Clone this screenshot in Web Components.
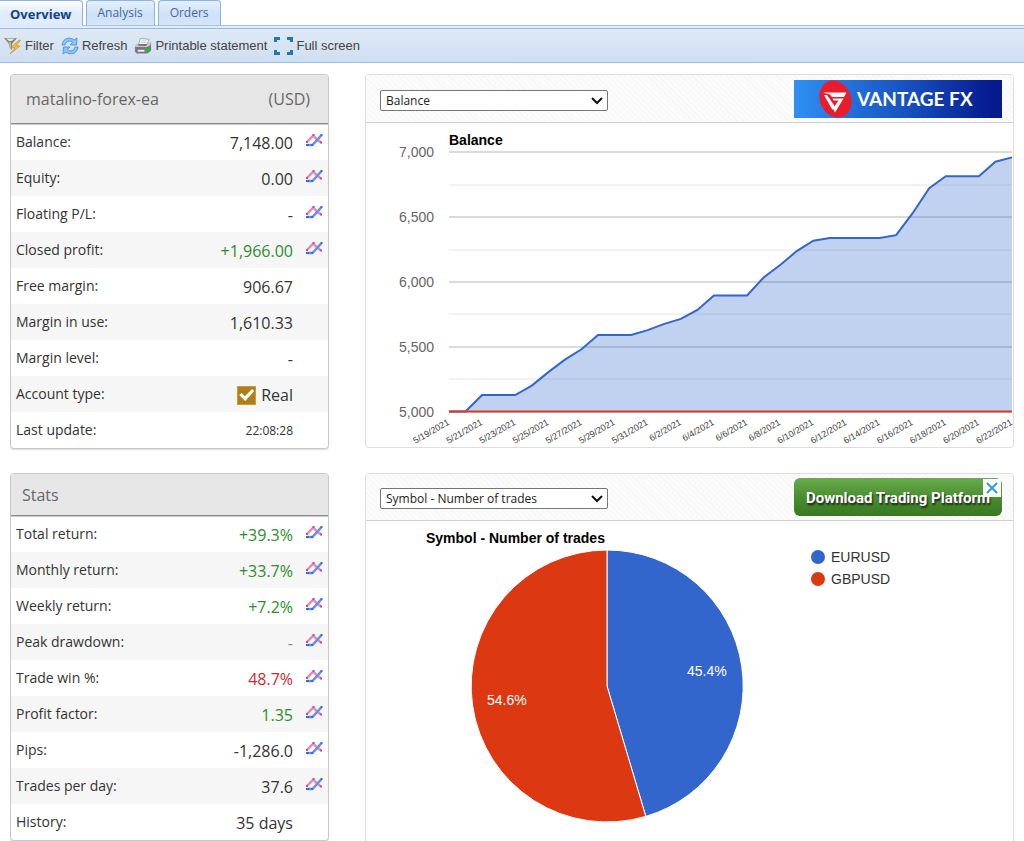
<!DOCTYPE html>
<html lang="en">
<head>
<meta charset="utf-8">
<title>Account overview</title>
<style>
  html, body { margin: 0; background: #fff; }
  body { font-family: "Open Sans", "Noto Sans", sans-serif; color: #333; }
</style>
</head>
<body>
<trading-app></trading-app>

<script>
const define = (name, html, setup) => {
  const tpl = document.createElement('template');
  tpl.innerHTML = html;
  customElements.define(name, class extends HTMLElement {
    constructor() {
      super();
      this.attachShadow({ mode: 'open' }).append(tpl.content.cloneNode(true));
    }
    connectedCallback() {
      if (setup && !this.ready) { this.ready = true; setup(this, this.shadowRoot); }
    }
  });
};

/* Tab strip */
define('tab-strip', `
<style>
  :host { display: block; background: #deecfd; border-bottom: 1px solid #99bbe8; }
  nav { display: flex; align-items: flex-end; gap: 3px; height: 26px; box-sizing: border-box;
        background: #fff; border-bottom: 1px solid #a3c2ee; }
  .gap { height: 2px; }
  button { height: 25px; box-sizing: border-box; padding: 0 11px; margin: 0;
           font: 12px/24px "Open Sans", sans-serif; color: #416aa3; cursor: pointer;
           background: linear-gradient(#e4effc, #cfe0f7 60%, #d6e5fa);
           border: 1px solid #8db2e3; border-bottom: 0; border-radius: 4px 4px 0 0; }
  button[aria-selected="true"] { height: 26px; padding: 0 10px; margin-bottom: -1px; font-weight: bold; font-size: 13px;
           color: #15428b; background: linear-gradient(#fff, #deecfd 50%);
           border-left: 0; border-top-left-radius: 0; }
</style>
<nav role="tablist">
  <button role="tab" aria-selected="true">Overview</button>
  <button role="tab" aria-selected="false">Analysis</button>
  <button role="tab" aria-selected="false">Orders</button>
</nav>
<div class="gap"></div>`);

/* Toolbar button: icon slot plus label */
define('tool-button', `
<style>
  :host { display: block; }
  button { display: flex; align-items: center; gap: 3px; padding: 0; border: 0; background: none;
           font: 13px/16px "Liberation Sans", Arial, sans-serif; color: #444; cursor: pointer; }
  ::slotted(svg) { display: block; }
</style>
<button><slot name="icon"></slot><slot></slot></button>`);

define('tool-bar', `
<style>
  :host { display: flex; align-items: center; gap: 7px; height: 33px; padding-left: 4px;
          background: linear-gradient(#dfe9f5, #cfdef0); border-bottom: 1px solid #99bbe8; }
</style>
<tool-button><svg slot="icon" width="18" height="18" viewBox="0 0 18 18">
  <path d="M0 1h13l-5 6v6l-3-3V7z" fill="#85857f"/><path d="M2 1.500h9l-3.500 2.500h-2.500z" fill="#e4e4e2"/>
  <path d="M6 5v6" stroke="#ddd"/>
  <path d="M15 3L7 10.500l4 .5L6 17l10-8-4-.5 4.500-5z" fill="#fbb843" stroke="#d08a30" stroke-width=".7"/>
</svg>Filter</tool-button>
<tool-button><svg slot="icon" width="18" height="18" viewBox="0 0 18 18">
  <path d="M1 8c1-8 9-8 12-5l3-2-.5 7H9l2.500-2.500C9 3 5 4 4 8z" fill="#8cc4f6" stroke="#3a8bdc" stroke-width=".8"/>
  <path d="M17 10c-1 8-9 8-12 5l-3 2 .5-7H9l-2.500 2.500C9 15 13 14 14 10z" fill="#8cc4f6" stroke="#3a8bdc" stroke-width=".8"/>
</svg>Refresh</tool-button>
<tool-button><svg slot="icon" width="18" height="18" viewBox="0 0 19 18">
  <path d="M7 1l9 1-3 7H4z" fill="#f4f8fc" stroke="#8b97a5" stroke-width=".8"/>
  <path d="M8 3.500h5M7 5.500h6" stroke="#b7c5d5" stroke-width=".8"/>
  <path d="M1 9l3-2h10l4-2v9l-4 3H3l-2-2z" fill="#75797d"/>
  <path d="M1 9l3-1.500h1L4.500 9H13l1-2 3.500-2v3l-3.500 2H1z" fill="#c9cccf"/>
  <path d="M4 14h7" stroke="#eee" stroke-width="2"/>
  <rect x="12" y="11.500" width="5" height="4" rx="1" fill="#35b03a"/>
</svg>Printable statement</tool-button>
<tool-button><svg slot="icon" width="19" height="20" viewBox="0 0 19 20" fill="none" stroke="#1f78ae" stroke-width="3">
  <path d="M1.500 6V2.500H6M13 2.500h4.500V6M17.500 14v3.500H13M6 17.500H1.500V14"/>
</svg>Full screen</tool-button>`);

/* Card with a caption and rows of label / value / chart button */
define('stat-card', `
<style>
  :host { display: block; background: #fff; border: 1px solid #c8c8c8; border-radius: 4px;
          box-shadow: 0 1px 1px #ddd; overflow: hidden; }
  header { display: flex; justify-content: space-between; align-items: center; box-sizing: border-box;
           height: var(--head, 49px); padding: 0 18px 0 var(--inset, 15px);
           background: #e6e6e6; border-bottom: 1px solid #8e8e8e; box-shadow: 0 1px #c8c8c8;
           position: relative; color: #666; font-size: 16px; line-height: 22px; }
  table { width: 100%; border-collapse: collapse; }
  tr { height: 36px; }
  tr:nth-child(even) { background: #f6f6f6; }
  th, td { padding: 0; line-height: 22px; vertical-align: top; color: #333; }
  th { text-align: left; font-weight: normal; font-size: 14px; padding: 7px 0 0 5px; }
  td { text-align: right; font-size: 16px; padding-top: 8px; }
  td:last-child { width: 35px; }
  .up { color: #2e8b2e; } .down { color: #cc2a30; } .small { font-size: 12px; } .muted { color: #888; }
  button { display: block; margin-left: 12px; padding: 0; border: 0; background: none; cursor: pointer; }
  button svg { display: block; }
  label { display: inline-flex; align-items: center; gap: 5px; }
  input { appearance: none; width: 19px; height: 19px; margin: 0; background: #b08018;
          border: 1px solid #c99b3c; display: grid; place-items: center; }
  input:checked::before { content: ""; width: 15px; height: 12px; background: #fff;
          clip-path: polygon(0 50%, 15% 34%, 38% 60%, 86% 0, 100% 16%, 40% 100%); }
</style>
<header><slot name="title"></slot><slot name="unit"></slot></header>
<table><tbody></tbody></table>`, (host, root) => {
  const icon = `<svg width="18" height="18" viewBox="0 0 18 18" fill="none" stroke-width="2.500" stroke-linejoin="round">
    <path d="M2.500 9.500L8.300 3.500L12 7.500L16 10.500" stroke="#e08bb3"/><path d="M2 13H7.500L16.300 3.300" stroke="#6b90de"/>
    <g fill="#cc4c90"><path d="M1 9h2v2H1zM7.500 2h2v2h-2zM15 9.500h2v2h-2z"/></g>
    <g fill="#3c6bd0"><path d="M1 12h3v2H1zM6 12h2v2H6zM15.500 2h2v2h-2z"/></g></svg>`;
  host.show = rows => {
    root.querySelector('tbody').innerHTML = rows.map(([name, value, cls, chart]) =>
      `<tr><th scope="row">${name}</th><td class="${cls}">${
        value === 'Real' ? '<label><input type="checkbox" checked>Real</label>' : value
      }</td><td>${chart ? `<button aria-label="Show chart of ${name.replace(':', '')}">${icon}</button>` : ''}</td></tr>`).join('');
  };
});

/* Chart frame: header with a drop-down and a banner slot, chart below */
define('chart-card', `
<style>
  :host { display: block; background: #fff; border: 1px solid #dedede; border-radius: 4px; overflow: hidden; }
  header { display: flex; justify-content: space-between; align-items: flex-start; box-sizing: border-box;
           height: var(--bar, 48px); padding: var(--bar-pad, 5px) 11px 0 14px; border-bottom: 1px solid #d0d0d0;
           background: repeating-linear-gradient(45deg, #fbfbfb 0 3px, #f6f6f6 3px 4px); }
  .pick { position: relative; width: 228px; margin-top: 10px; }
  select { appearance: none; display: block; width: 100%; height: 21px; box-sizing: border-box; margin: 0;
           padding: 0 24px 0 5px; font: 12px/19px "Open Sans", sans-serif; color: #222;
           background: #fff; border: 1px solid #767676; border-radius: 2px; }
  .pick svg { position: absolute; right: 5px; top: 7px; pointer-events: none; }
</style>
<header>
  <div class="pick">
    <select aria-label="Chart type"><option></option></select>
    <svg width="12" height="8" viewBox="0 0 12 8" fill="none" stroke="#111" stroke-width="2"><path d="M1 1l5 5 5-5"/></svg>
  </div>
  <slot name="banner"></slot>
</header>
<slot></slot>`, (host, root) => {
  root.querySelector('option').textContent = host.getAttribute('chart');
});

define('broker-banner', `
<style>
  :host { display: block; }
  a { display: flex; align-items: center; gap: 4px; width: 208px; height: 38px; box-sizing: border-box;
      padding-left: 24px; color: #fff; text-decoration: none; white-space: nowrap;
      font: bold 19px/38px Lato, sans-serif;
      background: linear-gradient(90deg, #2f90f4, #1650bf 55%, #061a8e 95%); }
</style>
<a href="#"><svg width="35" height="38" viewBox="0 0 35 38">
  <ellipse cx="17.500" cy="19" rx="15.500" ry="19" fill="#ea1c2c" transform="rotate(-24 17.500 19)"/>
  <path d="M5 12.500h23.500l-2.500 4.500H14l-2-2.500zM6 15l3 0 7.500 11-2 4zM25.500 18.500l-8.500 14-2-4 5.500-8h-5l-1-2z" fill="#fff"/>
</svg><span>VANTAGE FX</span></a>`);

define('download-banner', `
<style>
  :host { display: block; position: relative; }
  a { display: block; width: 208px; height: 38px; border-radius: 6px; text-align: center; color: #fff;
      font: bold 15px/40px Roboto, sans-serif; text-decoration: none; white-space: nowrap;
      text-shadow: 1px 2px 2px #1a1a1a; background: linear-gradient(#69ab4e, #4a8f30 50%, #387820); }
  button { position: absolute; top: 1px; right: 1px; width: 18px; height: 18px; padding: 3px; border: 0; background: #fff; }
  svg { display: block; }
</style>
<a href="#">Download Trading Platform</a>
<button aria-label="Close"><svg width="12" height="12" viewBox="0 0 12 12" stroke="#2f9bd8" stroke-width="2"><path d="M1 1l10 10M11 1L1 11"/></svg></button>`);

/* Area chart of the balance, one value per day */
define('balance-chart', `
<style>
  :host { display: block; }
  svg { display: block; width: 100%; height: auto; font: 14px "Liberation Sans", Arial, sans-serif; }
</style>
<svg viewBox="0 0 647 324" role="img" aria-label="Balance by day"></svg>`, (host, root) => {
  const data = [5000, 5000, 5127, 5127, 5127, 5200, 5304, 5400, 5480, 5590, 5590, 5590, 5628, 5676, 5715, 5784,
    5896, 5896, 5896, 6034, 6130, 6238, 6318, 6338, 6338, 6338, 6338, 6361, 6530, 6723, 6815, 6815, 6815, 6927, 6961];
  const x = i => 83 + i * 563 / 34;
  const y = v => 288.5 - (v - 5000) * 0.1296;
  let s = '';
  for (let v = 5000; v <= 7000; v += 250) {
    const major = v % 500 === 0;
    s += `<rect x="83" y="${Math.round(y(v) - 1)}" width="563" height="2" fill="${major ? '#dadada' : '#f2f2f2'}"/>`;
    if (major) s += `<text x="68" y="${y(v) + 5}" text-anchor="end" fill="#666">${v.toLocaleString('en-US')}</text>`;
  }
  const pts = data.map((v, i) => `${x(i)} ${y(v)}`).join('L');
  s += `<path d="M${pts}V288.500H83Z" fill="#3366cc" fill-opacity=".3"/>`;
  s += `<path d="M${pts}" fill="none" stroke="#3366cc" stroke-width="2"/>`;
  s += `<path d="M83 288.500H646" stroke="#cf4026" stroke-width="2"/>`;
  for (let i = 0; i <= 34; i += 2) {
    const d = new Date(Date.UTC(2021, 4, 19 + i));
    s += `<text transform="translate(${x(i) + 1} 301) rotate(-30)" text-anchor="end" font-size="9" fill="#444">${
      d.getUTCMonth() + 1}/${d.getUTCDate()}/2021</text>`;
  }
  s += `<text x="83" y="22" font-weight="bold" fill="#000">Balance</text>`;
  root.querySelector('svg').innerHTML = s;
});

define('symbol-chart', `
<style>
  :host { display: block; }
  svg { display: block; width: 100%; height: auto; font: 14px "Liberation Sans", Arial, sans-serif; }
</style>
<svg viewBox="0 0 647 334" role="img" aria-label="Number of trades by symbol">
  <g stroke="#fff">
    <path d="M241 165V29A136 136 0 0 1 279.800 295.400Z" fill="#3366cc"/>
    <path d="M241 165L279.800 295.400A136 136 0 1 1 241 29Z" fill="#dc3912"/>
  </g>
  <text x="60" y="22" font-weight="bold" fill="#000">Symbol - Number of trades</text>
  <g fill="#fff"><text x="321" y="155">45.4%</text><text x="121" y="184">54.6%</text></g>
  <circle cx="452" cy="36" r="7" fill="#3366cc"/><circle cx="452" cy="58" r="7" fill="#dc3912"/>
  <g fill="#333"><text x="465" y="41">EURUSD</text><text x="465" y="63">GBPUSD</text></g>
</svg>`);

define('trading-app', `
<style>
  :host { display: flex; flex-direction: column; height: 100vh; }
  main { flex: 1; min-height: 0; overflow: auto; scrollbar-width: none; box-sizing: border-box;
         padding: 11px 10px 24px; display: grid; grid-template-columns: 319px minmax(0, 1fr);
         grid-auto-rows: max-content; gap: 24px 36px; align-items: start; align-content: start; }
  .stats { --head: 42px; --inset: 11px; }
  .symbols { --bar: 47px; --bar-pad: 4px; }
</style>
<tab-strip></tab-strip>
<tool-bar></tool-bar>
<main>
  <stat-card class="account"><span slot="title">matalino-forex-ea</span><span slot="unit">(USD)</span></stat-card>
  <chart-card chart="Balance"><broker-banner slot="banner"></broker-banner><balance-chart></balance-chart></chart-card>
  <stat-card class="stats"><span slot="title">Stats</span></stat-card>
  <chart-card class="symbols" chart="Symbol - Number of trades"><download-banner slot="banner"></download-banner><symbol-chart></symbol-chart></chart-card>
</main>`, (host, root) => {
  root.querySelector('.account').show([
    ['Balance:', '7,148.00', '', 1], ['Equity:', '0.00', '', 1], ['Floating P/L:', '-', '', 1],
    ['Closed profit:', '+1,966.00', 'up', 1], ['Free margin:', '906.67', ''], ['Margin in use:', '1,610.33', ''],
    ['Margin level:', '-', ''], ['Account type:', 'Real', ''], ['Last update:', '22:08:28', 'small']]);
  root.querySelector('.stats').show([
    ['Total return:', '+39.3%', 'up', 1], ['Monthly return:', '+33.7%', 'up', 1], ['Weekly return:', '+7.2%', 'up', 1],
    ['Peak drawdown:', '-', 'muted', 1], ['Trade win %:', '48.7%', 'down', 1], ['Profit factor:', '1.35', 'up', 1],
    ['Pips:', '-1,286.0', '', 1], ['Trades per day:', '37.6', '', 1], ['History:', '35 days', '']]);
});
</script>
</body>
</html>
